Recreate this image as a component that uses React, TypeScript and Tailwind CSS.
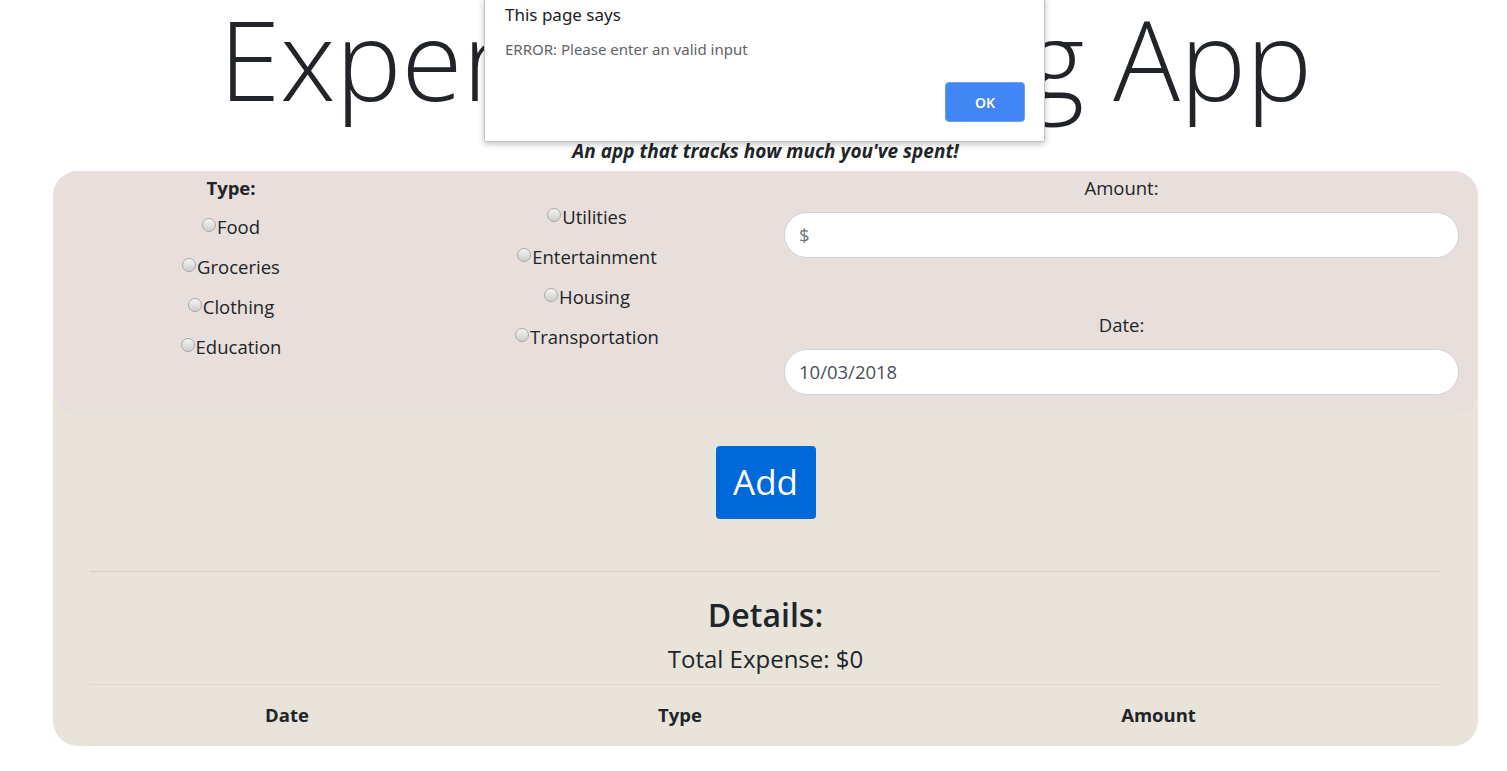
import React from "react";

function Radio({ label }: { label: string }) {
  return (
    <div className="flex h-[40px] items-center justify-center">
      <span className="mb-[5px] mr-[1px] inline-block h-[14px] w-[14px] rounded-full border border-[#a9a9a9] bg-linear-to-b from-[#f4f4f4] to-[#cfcfcf]" />
      <span>{label}</span>
    </div>
  );
}

export default function App() {
  return (
    <div className="relative min-h-screen bg-white pl-[24px] font-['Open_Sans',sans-serif] text-[#212529]">
      <h1 className="h-[117px] text-center text-[111px] font-light leading-[117px] tracking-[0px]">
        Expense Tracking App
      </h1>
      <p className="mt-[21px] mb-[6px] text-center text-[19px] font-bold italic leading-[27px]">
        An app that tracks how much you've spent!
      </p>

      <div className="mx-[29px] rounded-[25px] bg-[#e8e4da]">
        <div className="grid h-[244px] grid-cols-[356px_356px_1fr] rounded-[25px] bg-[#e8dedb] text-[18.5px]">
          <div className="flex flex-col pt-[1px]">
            <div className="h-[35px] text-center text-[18.5px] font-bold leading-[32px]">Type:</div>
            <Radio label="Food" />
            <Radio label="Groceries" />
            <Radio label="Clothing" />
            <Radio label="Education" />
          </div>
          <div className="flex flex-col pt-[26px]">
            <Radio label="Utilities" />
            <Radio label="Entertainment" />
            <Radio label="Housing" />
            <Radio label="Transportation" />
          </div>
          <div className="flex flex-col px-[19px] pt-[3px]">
            <div className="text-center leading-[27px]">Amount:</div>
            <div className="mt-[11px] flex h-[46px] items-center rounded-full border border-[#ced4da] bg-white px-[14px] text-[#6c757d]">
              $
            </div>
            <div className="mt-[53px] text-center leading-[27px]">Date:</div>
            <div className="mt-[11px] flex h-[46px] items-center rounded-full border border-[#ced4da] bg-white px-[14px] text-[#495057]">
              10/03/2018
            </div>
          </div>
        </div>

        <div className="flex justify-center pt-[31px]">
          <button className="flex h-[73px] w-[100px] items-center justify-center rounded-[4px] bg-[#0069d9] text-[35px] text-white">
            Add
          </button>
        </div>

        <div className="mx-[37px] mt-[52px] border-t border-[#d3cec3]" />
        <div className="mt-[23px] text-center text-[32px] font-semibold leading-[40px]">Details:</div>
        <div className="mt-[9px] text-center text-[24px] font-medium leading-[30px]">Total Expense: $0</div>
        <div className="mx-[37px] mt-[10px] grid grid-cols-[394px_392px_1fr] border-t border-b border-t-[#dcd8cf] border-b-[#dee2e6] text-[18.5px] font-bold">
          <div className="h-[60px] text-center leading-[60px]">Date</div>
          <div className="h-[60px] text-center leading-[60px]">Type</div>
          <div className="h-[60px] text-center leading-[60px]">Amount</div>
        </div>
      </div>

      <div className="absolute left-[484px] top-[-2px] h-[144px] w-[561px] rounded-b-[2px] border border-[#c4c4c4] bg-white font-['Noto_Sans',sans-serif] shadow-[0_2px_6px_rgba(0,0,0,0.25)]">
        <div className="pl-[20px] pt-[4px] text-[17px] leading-[24px] text-[#202124]">This page says</div>
        <div className="pl-[20px] pt-[11px] text-[15px] leading-[22px] text-[#5f6368]">ERROR: Please enter an valid input</div>
        <div className="flex justify-end pr-[19px] pt-[22px]">
          <div className="flex h-[40px] w-[80px] items-center justify-center rounded-[4px] border border-[#6fa0f6] bg-[#4285f4] text-[14px] font-semibold text-white">
            OK
          </div>
        </div>
      </div>
    </div>
  );
}
